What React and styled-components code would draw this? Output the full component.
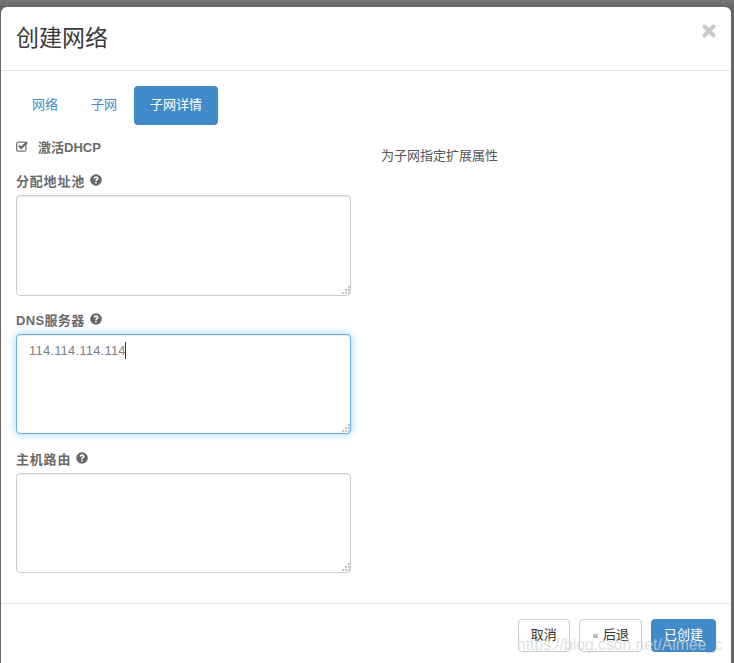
import React from "react";
import styled, { createGlobalStyle } from "styled-components";

const GlobalStyle = createGlobalStyle`
  html, body {
    margin: 0;
    height: 100%;
    overflow: hidden;
    background: #666;
  }
  * { box-sizing: border-box; }
  body {
    font-family: "Liberation Sans", "Noto Sans CJK SC", sans-serif;
    font-size: 13px;
    color: #555;
  }
`;

const Backdrop = styled.div`
  position: relative;
  width: 734px;
  height: 663px;
  padding: 7px 3px 0 1px;
  overflow: hidden;
  background: linear-gradient(#777 0, #666 7px);
`;

const Modal = styled.div`
  background: #fff;
  height: 680px;
  border-radius: 6px;
  display: flex;
  flex-direction: column;
`;

const Header = styled.div`
  height: 64px;
  flex: none;
  padding: 15px;
  border-bottom: 1px solid #e5e5e5;
  display: flex;
  justify-content: space-between;
`;

const Title = styled.h3`
  margin: 0;
  font-size: 23px;
  line-height: 32px;
  font-weight: 400;
  color: #3a3a3a;
`;

const Close = styled.span`
  margin: 2px 0 0 0;
  line-height: 0;
`;

const Body = styled.div`
  height: 532px;
  flex: none;
  padding: 15px;
`;

const Tabs = styled.div`
  display: flex;
  gap: 1px;
  height: 39px;
`;

const Tab = styled.a`
  padding: 0 16px;
  border-radius: 4px;
  font-size: 13px;
  line-height: 38px;
  color: ${(p) => (p.$active ? "#fff" : "#428bca")};
  background: ${(p) => (p.$active ? "#428bca" : "transparent")};
`;

const Columns = styled.div`
  display: grid;
  grid-template-columns: 335px 1fr;
  column-gap: 30px;
  margin-top: 12px;
`;

const CheckRow = styled.div`
  display: flex;
  align-items: center;
  gap: 10px;
  height: 18px;
  margin-bottom: 16px;
  font-weight: 700;
  color: #6a6a6a;
`;

const Field = styled.div`
  margin-bottom: ${(p) => (p.$tall ? "14px" : "15px")};
`;

const Label = styled.label`
  display: flex;
  align-items: center;
  gap: 5px;
  height: 18px;
  margin-bottom: 6px;
  font-weight: 700;
  color: #6a6a6a;
  letter-spacing: ${(p) => p.$spacing};
`;

const AreaWrap = styled.div`
  position: relative;
  line-height: 0;
`;

const Area = styled.textarea`
  display: block;
  width: 335px;
  height: ${(p) => (p.$tall ? "101px" : "100px")};
  padding: 7px 12px;
  border: 1px solid ${(p) => (p.$focused ? "#66afe9" : "#ccc")};
  border-radius: 4px;
  outline: none;
  resize: none;
  font-family: inherit;
  font-size: 13px;
  letter-spacing: 0.2px;
  line-height: 18px;
  color: #808080;
  box-shadow: ${(p) =>
    p.$focused
      ? "inset 0 1px 1px rgba(0,0,0,.075), 0 0 8px rgba(102,175,233,.6)"
      : "inset 0 1px 1px rgba(0,0,0,.075)"};
`;

const Caret = styled.span`
  position: absolute;
  left: 109px;
  top: 8px;
  width: 1px;
  height: 17px;
  background: #333;
`;

const GripMark = styled.svg`
  position: absolute;
  right: 1px;
  bottom: 1px;
`;

const Hint = styled.p`
  margin: 0;
  padding-top: 10px;
  font-size: 13px;
  line-height: 18px;
  color: #555;
`;

const Footer = styled.div`
  border-top: 1px solid #e5e5e5;
  padding: 15px 15px 0;
  display: flex;
  justify-content: flex-end;
  gap: 9px;
`;

const Button = styled.button`
  height: 33px;
  padding: 0 12px 5px;
  border-radius: 4px;
  font-family: inherit;
  font-size: 13px;
  color: ${(p) => (p.$primary ? "#fff" : "#333")};
  background: ${(p) => (p.$primary ? "#428bca" : "#fff")};
  border: 1px solid ${(p) => (p.$primary ? "#3f87c4" : "#ccc")};
`;

const Quote = styled.span`
  font-size: 10px;
  color: #666;
  margin-left: 1px;
  margin-right: 1px;
`;

const Watermark = styled.div`
  position: absolute;
  left: 517px;
  top: 635px;
  font-size: 15.7px;
  line-height: 20px;
  white-space: nowrap;
  color: rgba(214, 214, 214, 0.75);
`;

function HelpIcon() {
  return (
    <svg width="12" height="12" viewBox="0 0 12 12">
      <circle cx="6" cy="6" r="5.8" fill="#666" />
      <path d="M3.6 4.6c0-3 4.9-3 4.9-.2 0 1.7-1.8 1.5-1.8 2.9H5.2c0-2.2 1.6-2 1.6-2.9 0-.9-1.6-.8-1.6.4z" fill="#fff" />
      <rect x="5.2" y="8" width="1.5" height="1.5" fill="#fff" />
    </svg>
  );
}

function CheckIcon() {
  return (
    <svg width="12" height="11" viewBox="0 0 12 11">
      <rect x="0.7" y="1.2" width="9.2" height="9" rx="1.6" fill="none" stroke="#777" strokeWidth="1.3" />
      <path d="M2.8 4.6l2.4 2.4L11 1.2" fill="none" stroke="#666" strokeWidth="2" />
    </svg>
  );
}

function CloseIcon() {
  return (
    <svg width="14" height="14" viewBox="0 0 14 14">
      <path d="M2.5 2.5l9 9M11.5 2.5l-9 9" stroke="#c9c9c9" strokeWidth="4" strokeLinecap="round" />
    </svg>
  );
}

// the dotted resize corner of the old browser, pixel squares in a triangle
function Grip() {
  const dots = [[7, 0], [7, 3], [4, 3], [7, 6], [4, 6], [1, 6]];
  return (
    <GripMark width="9" height="9" viewBox="0 0 9 9">
      {dots.map(([x, y]) => (
        <rect key={`${x}-${y}`} x={x} y={y} width="2" height="2" fill="#c4c4c4" />
      ))}
    </GripMark>
  );
}

function AreaField({ label, value, focused, tall, spacing = "0.8px" }) {
  return (
    <Field $tall={tall}>
      <Label $spacing={spacing}>
        {label} <HelpIcon />
      </Label>
      <AreaWrap>
        <Area $focused={focused} $tall={tall} defaultValue={value} />
        <Grip />
        {focused && <Caret />}
      </AreaWrap>
    </Field>
  );
}

export default function App() {
  return (
    <>
      <GlobalStyle />
      <Backdrop>
        <Modal>
          <Header>
            <Title>创建网络</Title>
            <Close>
              <CloseIcon />
            </Close>
          </Header>
          <Body>
            <Tabs>
              <Tab>网络</Tab>
              <Tab>子网</Tab>
              <Tab $active>子网详情</Tab>
            </Tabs>
            <Columns>
              <div>
                <CheckRow>
                  <CheckIcon />
                  激活DHCP
                </CheckRow>
                <AreaField label="分配地址池" tall />
                <AreaField label="DNS服务器" value="114.114.114.114" focused spacing="0.35px" />
                <AreaField label="主机路由" />
              </div>
              <Hint>为子网指定扩展属性</Hint>
            </Columns>
          </Body>
          <Footer>
            <Button>取消</Button>
            <Button>
              <Quote>«</Quote> 后退
            </Button>
            <Button $primary>已创建</Button>
          </Footer>
        </Modal>
        <Watermark>https://blog.csdn.net/Aimee_c</Watermark>
      </Backdrop>
    </>
  );
}
